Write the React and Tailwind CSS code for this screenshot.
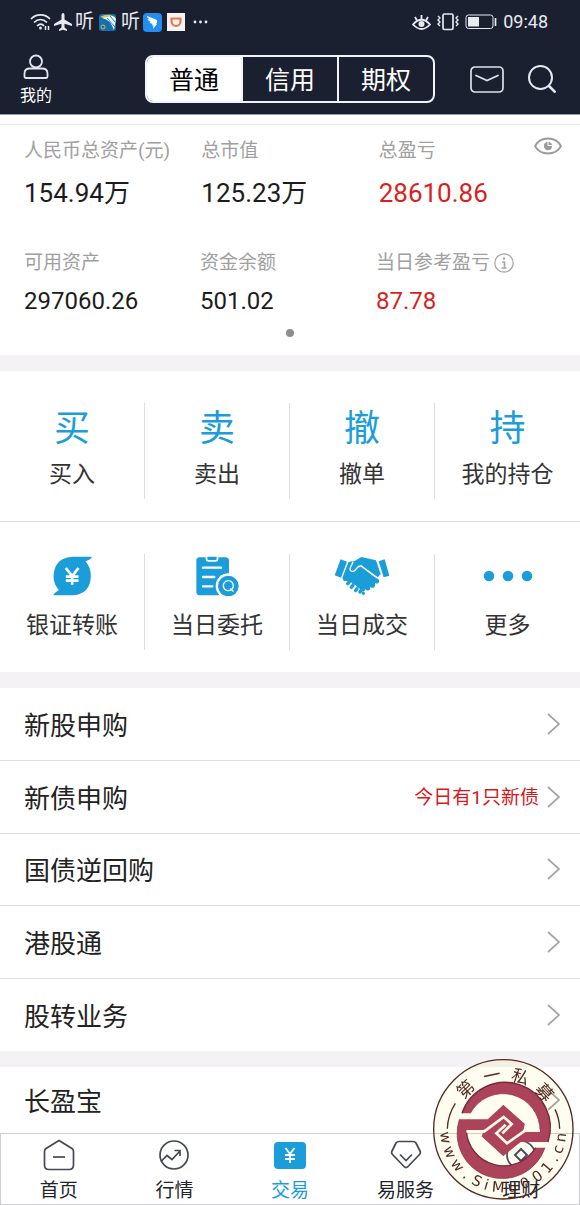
import React, { useState } from "react";
import clsx from "clsx";

const accountTabs = ["普通", "信用", "期权"];

const services = [
  { name: "新股申购" },
  { name: "新债申购", note: "今日有1只新债" },
  { name: "国债逆回购" },
  { name: "港股通" },
  { name: "股转业务" },
];

const stampTop = [
  ["第", -43],
  ["一", -12],
  ["私", 18],
  ["募", 48],
];

const stampBottom = [
  ["w", 82],
  ["w", 67],
  ["w", 52],
  [".", 39],
  ["S", 27],
  ["i", 17],
  ["M", 5],
  ["u", -9],
  ["0", -22],
  ["0", -36],
  ["1", -49],
  [".", -60],
  ["c", -70],
  ["n", -82],
];

function StatusBar() {
  return (
    <div className="flex h-11 items-center justify-between pl-[30px] pr-8 text-[#e8eaf2]">
      <div className="flex items-center gap-[3px]">
        <svg width="21" height="18" viewBox="0 0 21 18" fill="none" stroke="currentColor" strokeWidth="1.7">
          <path d="M1 6C6 .5 15 .5 20 6M4 9.5c4-4 9-4 13 0M7 13c2.500-2.500 5-2.500 7 0" />
          <circle cx="10.500" cy="15" r="1.500" fill="currentColor" stroke="none" />
          <path d="M15.500 13v4M18.500 13v4" strokeWidth="1.500" />
        </svg>
        <svg width="18" height="18" viewBox="0 0 18 18" fill="currentColor">
          <path d="M9 0c1 0 1.500 1 1.500 2.500v4L18 11v2l-7.500-2.200v3.700L13 16.500V18l-4-1.200L5 18v-1.500l2.500-2v-3.700L0 13v-2l7.500-4.500v-4C7.500 1 8 0 9 0z" />
        </svg>
        <span className="text-[19px] leading-5">听</span>
        <svg className="mx-0.5" width="17" height="17" viewBox="0 0 17 17">
          <rect width="17" height="17" rx="3" fill="#176fae" />
          <path d="M1 3Q8-1 14 2L9 5z" fill="#d8cb55" />
          <path d="M3 4Q11 5 15 16L17 5Q15 0 9 3z" fill="#eefaff" />
          <path d="M8 4L16 13M11 2l5 6" stroke="#2f86ba" />
          <circle cx="4" cy="13" r="2" fill="none" stroke="#c9bb52" />
        </svg>
        <span className="text-[19px] leading-5">听</span>
        <svg width="19" height="19" viewBox="0 0 19 19">
          <rect width="19" height="19" rx="4" fill="#248df0" />
          <path d="M4 3l9 3.500q2 1 1 3L13 11h1l-4 5 .5-3.500H9l.5-1.500Q7 10.500 6.500 9L8 9Q5 8 4.500 6L7 6.500Q4 5 4 3z" fill="#fff" />
        </svg>
        <svg className="ml-0.5" width="18" height="18" viewBox="0 0 18 18">
          <path d="M0 0h18v18H0z" fill="#f5f3f5" />
          <path d="M4.500 5.500h9V8c0 3-2 5-4.500 5S4.500 11 4.500 8z" fill="none" stroke="#ea7744" strokeWidth="2.200" strokeLinejoin="round" />
        </svg>
        <svg className="ml-1" width="18" height="4" viewBox="0 0 18 4" fill="currentColor">
          <circle cx="3" cy="2" r="1.400" />
          <circle cx="8.500" cy="2" r="1.400" />
          <circle cx="14" cy="2" r="1.400" />
        </svg>
      </div>
      <div className="flex items-center gap-[6px]">
        <svg width="19" height="17" viewBox="0 0 19 17" fill="none" stroke="currentColor" strokeWidth="1.800">
          <path d="M1 10.500Q9.500 1 18 10.500 9.500 19.500 1 10.500z" />
          <path d="M9.500 1v4M3 3l2 3.500M16 3l-2 3.500" />
          <circle cx="9.500" cy="10" r="3" fill="currentColor" stroke="none" />
        </svg>
        <svg width="22" height="18" viewBox="0 0 22 18" fill="none" stroke="currentColor" strokeWidth="1.700">
          <rect x="6" y="1" width="10" height="15.500" rx="1.500" />
          <path d="M1 3l2 2-2 2 2 2-2 2 2 2M21 3l-2 2 2 2-2 2 2 2-2 2" strokeWidth="1.400" />
        </svg>
        <svg width="32" height="16" viewBox="0 0 32 16" fill="none" stroke="currentColor">
          <rect x="1" y="1" width="27" height="13.500" rx="2.500" />
          <path d="M3 3h11v9.500H3z" fill="currentColor" stroke="none" />
          <path d="M30.500 4v8" strokeWidth="1.700" />
        </svg>
        <span className="text-lg leading-5">09:48</span>
      </div>
    </div>
  );
}

function Header() {
  const [active, setActive] = useState("普通");

  return (
    <header className="bg-[#1a2030] text-white border-b border-[#9a9caa]">
      <StatusBar />
      <div className="flex h-[70px] items-center">
        <div className="w-1/4 pt-0.5 pl-5">
          <button className="flex flex-col items-center text-base leading-5">
            <svg width="26" height="26" viewBox="0 0 26 26" fill="none" stroke="#e3e6f0" strokeWidth="1.800">
              <circle cx="13" cy="7.500" r="6" />
              <path d="M1.500 22.500v-3q0-5 5.500-5h12q5.500 0 5.500 5v3q0 1.500-1.500 1.500H3q-1.500 0-1.500-1.500z" />
            </svg>
            <span className="pt-1.5">我的</span>
          </button>
        </div>
        <div className="flex h-12 w-1/2 overflow-hidden rounded-lg border-2 border-[#f3f4f8]">
          {accountTabs.map((tab) => (
            <button
              key={tab}
              onClick={() => setActive(tab)}
              className={clsx(
                "flex-1 border-r-2 border-[#f3f4f8] pt-1 text-[25px] leading-8 last:border-r-0",
                tab === active ? "bg-white text-black" : "text-white"
              )}
            >
              {tab}
            </button>
          ))}
        </div>
        <div className="flex w-1/4 items-center justify-end gap-6 pr-6">
          <button aria-label="消息">
            <svg width="34" height="27" viewBox="0 0 34 27" fill="none" stroke="#dfe1ea" strokeWidth="1.700">
              <rect x="1" y="1" width="32" height="25" rx="4" />
              <path d="M6 9.500l11 5 11-5" strokeLinecap="round" />
            </svg>
          </button>
          <button aria-label="搜索">
            <svg width="28" height="28" viewBox="0 0 28 28" fill="none" stroke="#e8e8f0" strokeWidth="2">
              <circle cx="12.500" cy="12.500" r="11.500" />
              <path d="M20.500 20.500l7 7" strokeWidth="2.500" />
            </svg>
          </button>
        </div>
      </div>
    </header>
  );
}

function Assets() {
  return (
    <section className="relative bg-white pt-[9px]">
      <div className="grid grid-cols-3 border-t border-[#e3e3e5] px-6 pt-[10px]">
        <div>
          <p className="whitespace-nowrap text-[19px] leading-8 text-[#a0a0a0]">人民币总资产(元)</p>
          <p className="pt-1.5 text-[26px] leading-10 text-[#1c1c1c]">154.94万</p>
        </div>
        <div>
          <p className="text-[19px] leading-8 text-[#a0a0a0]">总市值</p>
          <p className="pt-1.5 text-[26px] leading-10 text-[#1c1c1c]">125.23万</p>
        </div>
        <div>
          <p className="text-[19px] leading-8 text-[#a0a0a0]">总盈亏</p>
          <p className="pt-1.5 text-[26px] leading-10 text-[#d91f22]">28610.86</p>
        </div>
      </div>
      <div className="grid grid-cols-3 pt-[34px] pr-7 pl-6">
        <div>
          <p className="text-[19px] leading-8 text-[#a0a0a0]">可用资产</p>
          <p className="pt-0.5 text-2xl leading-10 text-[#1c1c1c]">297060.26</p>
        </div>
        <div>
          <p className="text-[19px] leading-8 text-[#a0a0a0]">资金余额</p>
          <p className="pt-0.5 text-2xl leading-10 text-[#1c1c1c]">501.02</p>
        </div>
        <div>
          <p className="flex items-center gap-1 text-[19px] leading-8 text-[#a0a0a0]">
            当日参考盈亏
            <svg width="20" height="20" viewBox="0 0 20 20" fill="none" stroke="#a4a4a4" strokeWidth="1.200">
              <circle cx="10" cy="10" r="9.200" />
              <path d="M8 9h2.500v6M7.500 15h5" strokeWidth="1.600" />
              <circle cx="10" cy="5.500" r="1.200" fill="#a4a4a4" stroke="none" />
            </svg>
          </p>
          <p className="pt-0.5 text-2xl leading-10 text-[#d91f22]">87.78</p>
        </div>
      </div>
      <div className="flex justify-center pt-2 pb-[18px]">
        <span className="size-2 rounded-full bg-[#8f8f8f]" />
      </div>
      <button aria-label="隐藏金额" className="absolute top-[22px] right-[18px]">
        <svg width="28" height="18" viewBox="0 0 28 18" fill="none" stroke="#9b9b9b" strokeWidth="1.800">
          <path d="M1 9Q5 1.500 14 1.500T27 9q-4 7.500-13 7.500T1 9z" />
          <circle cx="14" cy="9" r="4.200" fill="#9b9b9b" stroke="none" />
          <path d="M14 4v4.500h4" stroke="#fff" strokeWidth="1" />
        </svg>
      </button>
    </section>
  );
}

function TransferIcon() {
  return (
    <svg width="39" height="40" viewBox="0 0 116 120">
      <path d="M60 2H114L116 5Q108 12 97 16 113 34 113 60 112 116 56 118H2L1 115Q8 108 17 102 1 84 1 60 4 4 60 2z" fill="#1b9dd9" />
      <path d="M38 36l19 24 19-24M57 60v26M38 62h38M38 74h38" fill="none" stroke="#fff" strokeWidth="8" />
    </svg>
  );
}

function OrdersIcon() {
  return (
    <svg width="43" height="40" viewBox="0 0 129 120">
      <path d="M10 4h78q11 0 11 11v103H12Q1 118 1 107V15Q1 4 10 4z" fill="#1b9dd9" />
      <path d="M29 0h38v10q0 7-7 7H36q-7 0-7-7z" fill="#fff" />
      <path d="M34 2h28v6q0 4-4 4H38q-4 0-4-4z" fill="#1b9dd9" />
      <path d="M21 35h54M21 63h34M21 91h28" stroke="#fff" strokeWidth="7" strokeLinecap="round" />
      <circle cx="97" cy="90" r="38" fill="#fff" />
      <circle cx="97" cy="90" r="31" fill="#1b9dd9" />
      <circle cx="97" cy="89" r="15" fill="none" stroke="#fff" strokeWidth="4" />
      <path d="M103 97l9 10" stroke="#fff" strokeWidth="4" />
    </svg>
  );
}

function HandshakeIcon() {
  return (
    <svg width="56" height="40" viewBox="132 530 168 120" fill="#1b9dd9">
      <path d="M152 540l19 7-18 48-19-7zM266 546l18-6 14 49-17 5z" />
      <path d="M175 549q8-5 18-3l10 6 50 40 9 4q8 7 4 14-5 5-11 1 2 11-4 14-6 2-11-3 2 9-4 11-6 2-11-4 1 7-6 8-6 0-9-6-2-7-9-7-2-10-12-8-4-9-13-7-6-8-14-3l-5-10z" />
      <path d="M188 549l26-16 44 10 14 41-9 10-50-36q-8 0-17 13-8 6-12 0-2-4 3-14z" />
      <path d="M263 597L213 560q-8-1-17 12-9 8-15 1-3-5 5-18l3-8" fill="none" stroke="#fff" strokeWidth="4" />
      <g fill="none" stroke="#1b9dd9" strokeWidth="10" strokeLinecap="round">
        <path d="M173 613l4-4M184 624l5-6M197 634l4-6M210 638l2-3M220 642l0 0" />
      </g>
    </svg>
  );
}

function DotsIcon() {
  return (
    <svg width="50" height="12" viewBox="0 0 50 12" fill="#1b9dd9">
      <circle cx="6" cy="6" r="5.300" />
      <circle cx="25" cy="6" r="5.300" />
      <circle cx="44" cy="6" r="5.300" />
    </svg>
  );
}

const textActions = [
  { label: "买入", icon: "买" },
  { label: "卖出", icon: "卖" },
  { label: "撤单", icon: "撤" },
  { label: "我的持仓", icon: "持" },
];

const iconActions = [
  { label: "银证转账", icon: <TransferIcon /> },
  { label: "当日委托", icon: <OrdersIcon /> },
  { label: "当日成交", icon: <HandshakeIcon /> },
  { label: "更多", icon: <DotsIcon /> },
];

function ActionRow({ items, iconClass }) {
  return (
    <div className="grid grid-cols-4 border-b border-[#dedee0] pt-8 pb-[22px] last:border-b-0">
      {items.map((item) => (
        <button key={item.label} className="flex flex-col items-center border-r border-[#dedee0] last:border-r-0">
          <span className={clsx("flex h-12 items-center text-[#1b9dd9]", iconClass)}>{item.icon}</span>
          <span className="text-[23px] leading-[48px] text-[#333]">{item.label}</span>
        </button>
      ))}
    </div>
  );
}

function Actions() {
  return (
    <section className="border-y-[16px] border-[#f5f2f5] bg-white">
      <ActionRow items={textActions} iconClass="pt-1 text-4xl leading-[44px]" />
      <ActionRow items={iconActions} iconClass="pb-1" />
    </section>
  );
}

function Chevron() {
  return (
    <svg width="13" height="22" viewBox="0 0 13 22" fill="none" stroke="#a5a5a5" strokeWidth="1.700">
      <path d="M1 1l11 10L1 21" />
    </svg>
  );
}

function ServiceRow({ name, note }) {
  return (
    <a href="#" className="flex min-h-[66px] flex-1 items-center border-b border-[#dedee0] pl-6 pr-5 last:border-b-0">
      <span className="flex-1 pt-1 text-[26px] leading-9 text-[#222]">{name}</span>
      {note && <span className="pt-0.5 pr-2 text-[19px] leading-6 text-[#d8171b]">{note}</span>}
      <Chevron />
    </a>
  );
}

const navItems = [
  {
    label: "首页",
    icon: (
      <svg width="32" height="32" viewBox="0 0 32 32" fill="none" stroke="#444854" strokeWidth="1.700">
        <path d="M16 1.500L29 9.500q1.500 1 1.500 3V26q0 4.500-4.500 4.500H6Q1.500 30.500 1.500 26V12.500q0-2 1.500-3z" />
        <path d="M10 18h12" />
      </svg>
    ),
  },
  {
    label: "行情",
    icon: (
      <svg width="32" height="32" viewBox="0 0 32 32" fill="none" stroke="#444854" strokeWidth="1.700">
        <circle cx="16" cy="16" r="14" />
        <path d="M3 22.500l6-6 5 4L22 12M16.500 11.500h5.500V17" />
      </svg>
    ),
  },
  {
    label: "交易",
    active: true,
    icon: (
      <svg width="32" height="32" viewBox="0 0 32 32">
        <rect y="3" width="32" height="27" rx="4" fill="#1b9dd9" />
        <path d="M11.500 9l4.500 6 4.500-6M16 15v9M11 16h10M11 20h10" fill="none" stroke="#fff" strokeWidth="1.800" />
      </svg>
    ),
  },
  {
    label: "易服务",
    icon: (
      <svg width="32" height="32" viewBox="0 0 32 32" fill="none" stroke="#444854" strokeWidth="1.700">
        <path d="M9 2.500h14q2 0 3 1.500l4 8q1 2-.5 3.500L18 27.500q-2 2-4 0L2.500 15.500Q1 14 2 12l4-8q1-1.500 3-1.500z" />
        <path d="M10 15.500l6 6 6-6" />
      </svg>
    ),
  },
  {
    label: "理财",
    icon: (
      <svg width="32" height="32" viewBox="0 0 32 32" fill="none" stroke="#444f66" strokeWidth="1.700">
        <circle cx="16" cy="16" r="14" />
        <path d="M16 10l6 6-6 6-6-6z" strokeWidth="2" />
      </svg>
    ),
  },
];

function BottomNav() {
  return (
    <nav className="sticky bottom-0 grid h-[72px] grid-cols-5 border border-[#cfcfd1] bg-white">
      {navItems.map((item) => (
        <a key={item.label} href="#" className="flex flex-col items-center pt-[5px]">
          {item.icon}
          <span className={clsx("pt-2 text-[19px] leading-6", item.active ? "text-[#1b9dd9]" : "text-[#22242c]")}>
            {item.label}
          </span>
        </a>
      ))}
    </nav>
  );
}

function Stamp() {
  return (
    <>
      <div className="pointer-events-none fixed right-[6px] bottom-[5px] size-[141px] rounded-full bg-[#fffdf0] mix-blend-multiply" />
      <svg className="pointer-events-none fixed right-[6px] bottom-[5px]" width="141" height="141" viewBox="24 27 423 423">
        <circle cx="235" cy="238" r="209" fill="none" stroke="#54291f" strokeWidth="4" />
        <path d="M67 236q1-40 24-76M404 236q-1-32-14-58" fill="none" stroke="#54291f" strokeWidth="4" />
        {/* two rings, each running into one half of the coin */}
        <g fill="#ad435b">
          <path d="M111 190A134 134 0 0 1 369 276H287L235 318 170 259 235 199 262 223 232 250 246 263 292 246H345A111 111 0 0 0 136 190z" />
          <path d="M103 208H188L235 165 299 222 246 280 214 250 242 224 235 214 176 240H124A112 112 0 0 0 332 293H360A134 134 0 0 1 103 208z" />
          <path d="M235 165L299 222 292 260 235 318 170 259 188 215z" />
        </g>
        <path d="M111 190A134 134 0 0 1 369 276M124 240A112 112 0 0 0 332 293" fill="none" stroke="#74293d" strokeWidth="4" />
        <path d="M136 190A111 111 0 0 1 345 246M103 208A134 134 0 0 0 360 293" fill="none" stroke="#8b3149" strokeWidth="2" />
        <g fill="none" stroke="#fffbe6" strokeWidth="8">
          <path d="M124 244H178L236 201 260 222 232 250" />
          <path d="M345 242H300L246 280 214 250 242 224" />
        </g>
        <g fill="#54291f" textAnchor="middle">
          {stampTop.map(([char, angle]) => (
            <text key={char} x="235" y="91" fontSize="52" transform={`rotate(${angle} 235 238)`}>
              {char}
            </text>
          ))}
          {stampBottom.map(([char, angle], i) => (
            <text key={i} x="235" y="427" fontSize="44" fontFamily="DejaVu Sans, sans-serif" transform={`rotate(${angle} 235 238)`}>
              {char}
            </text>
          ))}
        </g>
      </svg>
    </>
  );
}

export default function App() {
  return (
    <div className="flex min-h-screen flex-col bg-white font-['Roboto','Noto_Sans_CJK_SC',sans-serif]">
      <Header />
      <Assets />
      <Actions />
      <section className="flex flex-1 flex-col">
        {services.map((item) => (
          <ServiceRow key={item.name} name={item.name} note={item.note} />
        ))}
      </section>
      <section className="flex border-t-[16px] border-[#f5f2f5]">
        <ServiceRow name="长盈宝" />
      </section>
      <BottomNav />
      <Stamp />
    </div>
  );
}
